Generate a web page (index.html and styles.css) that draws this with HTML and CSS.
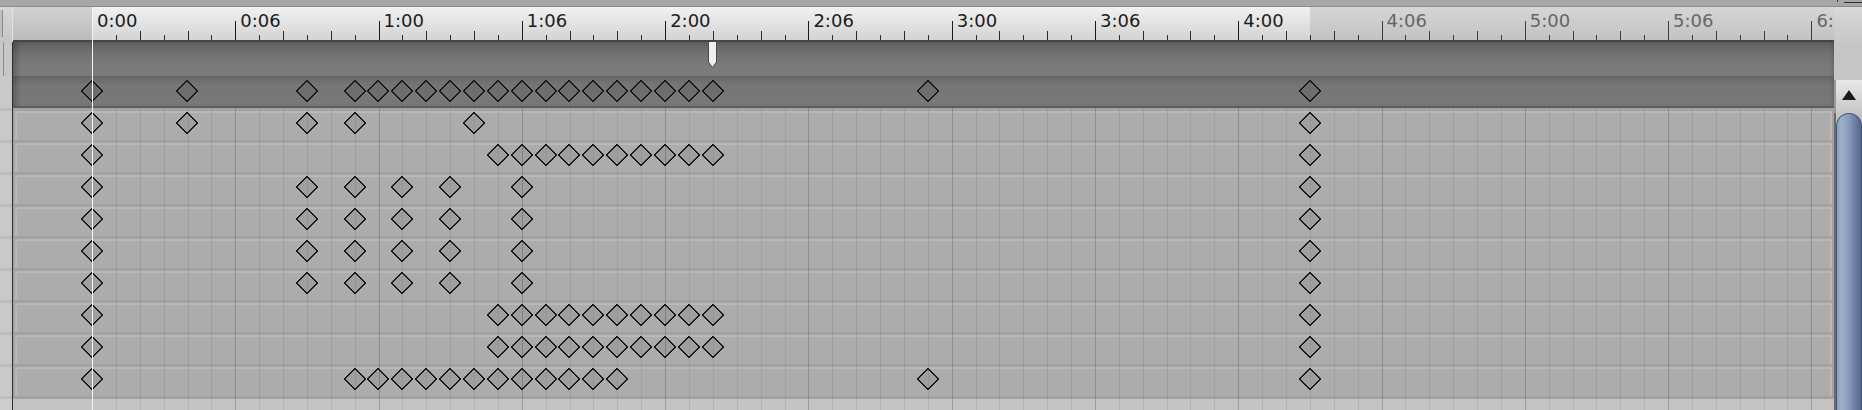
FILE: index.html
```html
<!DOCTYPE html>
<html>
<head>
<meta charset="utf-8">
<title>Timeline</title>
<link rel="stylesheet" href="styles.css">
</head>
<body>
<svg class="defs" width="0" height="0" aria-hidden="true">
  <symbol id="dm" viewBox="0 0 22 22">
    <path d="M11 0.8 L21.2 11 L11 21.2 L0.8 11 Z" fill="rgba(0,0,0,0.07)" stroke="#181818" stroke-width="1.5" shape-rendering="crispEdges"/>
  </symbol>
</svg>
<div class="app">
  <div class="topbar"><span class="tb-mark"></span><span class="tb-line"></span></div>
  <div class="main">
    <div class="side">
      <div class="side-ruler"><span class="ctl"></span></div>
      <div class="side-hdr"><span class="ctl ctl-b"></span></div>
      <div class="side-sel"></div>
      <div class="side-slot"></div>
      <div class="side-slot"></div>
      <div class="side-slot"></div>
      <div class="side-slot"></div>
      <div class="side-slot"></div>
      <div class="side-slot"></div>
      <div class="side-slot"></div>
      <div class="side-slot"></div>
      <div class="side-slot"></div>
      <div class="side-end"></div>
      <div class="side-rest"></div>
    </div>
    <div class="divider"><div class="div-top"></div><div class="div-bot"></div></div>
    <div class="timeline">
      <div class="ruler">
        <div class="ruler-bg"><div class="rb-pre"></div><div class="rb-act"></div><div class="rb-post"></div></div>
        <div class="ruler-scale">
          <div class="lead"></div>
          <div class="maj"><span class="lbl">0:00</span><div class="ticks"><i class="M"></i><i></i><i class="t"></i><i></i><i class="t"></i><i></i></div></div>
          <div class="maj"><span class="lbl">0:06</span><div class="ticks"><i class="M"></i><i></i><i class="t"></i><i></i><i class="t"></i><i></i></div></div>
          <div class="maj"><span class="lbl">1:00</span><div class="ticks"><i class="M"></i><i></i><i class="t"></i><i></i><i class="t"></i><i></i></div></div>
          <div class="maj"><span class="lbl">1:06</span><div class="ticks"><i class="M"></i><i></i><i class="t"></i><i></i><i class="t"></i><i></i></div></div>
          <div class="maj"><span class="lbl">2:00</span><div class="ticks"><i class="M"></i><i></i><i class="t"></i><i></i><i class="t"></i><i></i></div></div>
          <div class="maj"><span class="lbl">2:06</span><div class="ticks"><i class="M"></i><i></i><i class="t"></i><i></i><i class="t"></i><i></i></div></div>
          <div class="maj"><span class="lbl">3:00</span><div class="ticks"><i class="M"></i><i></i><i class="t"></i><i></i><i class="t"></i><i></i></div></div>
          <div class="maj"><span class="lbl">3:06</span><div class="ticks"><i class="M"></i><i></i><i class="t"></i><i></i><i class="t"></i><i></i></div></div>
          <div class="maj"><span class="lbl">4:00</span><div class="ticks"><i class="M"></i><i></i><i class="t"></i><i></i><i class="t"></i><i></i></div></div>
          <div class="maj dim"><span class="lbl">4:06</span><div class="ticks"><i class="M"></i><i></i><i class="t"></i><i></i><i class="t"></i><i></i></div></div>
          <div class="maj dim"><span class="lbl">5:00</span><div class="ticks"><i class="M"></i><i></i><i class="t"></i><i></i><i class="t"></i><i></i></div></div>
          <div class="maj dim"><span class="lbl">5:06</span><div class="ticks"><i class="M"></i><i></i><i class="t"></i><i></i><i class="t"></i><i></i></div></div>
          <div class="maj dim"><span class="lbl">6:00</span><div class="ticks"><i class="M"></i><i></i><i class="t"></i><i></i><i class="t"></i><i></i></div></div>
        </div>
      </div>
      <div class="tracks">
        <div class="layer-bg">
          <div class="bg-hdr"></div>
          <div class="bg-sel"></div>
          <div class="bg-slot"></div>
          <div class="bg-slot"></div>
          <div class="bg-slot"></div>
          <div class="bg-slot"></div>
          <div class="bg-slot"></div>
          <div class="bg-slot"></div>
          <div class="bg-slot"></div>
          <div class="bg-slot"></div>
          <div class="bg-slot"></div>
          <div class="bg-end"></div>
          <div class="bg-empty"></div>
        </div>
        <div class="layer-grid">
          <div class="gspace"></div>
          <div class="glines">
            <div class="glead"></div>
            <div class="gg"><b></b><b></b><b></b><b></b><b></b><b></b></div>
            <div class="gg"><b></b><b></b><b></b><b></b><b></b><b></b></div>
            <div class="gg"><b></b><b></b><b></b><b></b><b></b><b></b></div>
            <div class="gg"><b></b><b></b><b></b><b></b><b></b><b></b></div>
            <div class="gg"><b></b><b></b><b></b><b></b><b></b><b></b></div>
            <div class="gg"><b></b><b></b><b></b><b></b><b></b><b></b></div>
            <div class="gg"><b></b><b></b><b></b><b></b><b></b><b></b></div>
            <div class="gg"><b></b><b></b><b></b><b></b><b></b><b></b></div>
            <div class="gg"><b></b><b></b><b></b><b></b><b></b><b></b></div>
            <div class="gg"><b></b><b></b><b></b><b></b><b></b><b></b></div>
            <div class="gg"><b></b><b></b><b></b><b></b><b></b><b></b></div>
            <div class="gg"><b></b><b></b><b></b><b></b><b></b><b></b></div>
            <div class="gg"><b></b><b></b><b></b><b></b><b></b><b></b></div>
          </div>
        </div>
        <div class="layer-keys">
          <div class="krow hdr">
            <svg class="marker" style="grid-column:27" viewBox="0 0 9 26"><path d="M0.5 0 V20 L4.5 25.5 L8.5 20 V0" fill="#efefef" stroke="#4a4a4a" stroke-width="1"/></svg>
          </div>
          <div class="krow">
            <svg class="k" style="grid-column:1"><use href="#dm"/></svg>
            <svg class="k" style="grid-column:5"><use href="#dm"/></svg>
            <svg class="k" style="grid-column:10"><use href="#dm"/></svg>
            <svg class="k" style="grid-column:12"><use href="#dm"/></svg>
            <svg class="k" style="grid-column:13"><use href="#dm"/></svg>
            <svg class="k" style="grid-column:14"><use href="#dm"/></svg>
            <svg class="k" style="grid-column:15"><use href="#dm"/></svg>
            <svg class="k" style="grid-column:16"><use href="#dm"/></svg>
            <svg class="k" style="grid-column:17"><use href="#dm"/></svg>
            <svg class="k" style="grid-column:18"><use href="#dm"/></svg>
            <svg class="k" style="grid-column:19"><use href="#dm"/></svg>
            <svg class="k" style="grid-column:20"><use href="#dm"/></svg>
            <svg class="k" style="grid-column:21"><use href="#dm"/></svg>
            <svg class="k" style="grid-column:22"><use href="#dm"/></svg>
            <svg class="k" style="grid-column:23"><use href="#dm"/></svg>
            <svg class="k" style="grid-column:24"><use href="#dm"/></svg>
            <svg class="k" style="grid-column:25"><use href="#dm"/></svg>
            <svg class="k" style="grid-column:26"><use href="#dm"/></svg>
            <svg class="k" style="grid-column:27"><use href="#dm"/></svg>
            <svg class="k" style="grid-column:36"><use href="#dm"/></svg>
            <svg class="k" style="grid-column:52"><use href="#dm"/></svg>
          </div>
          <div class="krow">
            <svg class="k" style="grid-column:1"><use href="#dm"/></svg>
            <svg class="k" style="grid-column:5"><use href="#dm"/></svg>
            <svg class="k" style="grid-column:10"><use href="#dm"/></svg>
            <svg class="k" style="grid-column:12"><use href="#dm"/></svg>
            <svg class="k" style="grid-column:17"><use href="#dm"/></svg>
            <svg class="k" style="grid-column:52"><use href="#dm"/></svg>
          </div>
          <div class="krow">
            <svg class="k" style="grid-column:1"><use href="#dm"/></svg>
            <svg class="k" style="grid-column:18"><use href="#dm"/></svg>
            <svg class="k" style="grid-column:19"><use href="#dm"/></svg>
            <svg class="k" style="grid-column:20"><use href="#dm"/></svg>
            <svg class="k" style="grid-column:21"><use href="#dm"/></svg>
            <svg class="k" style="grid-column:22"><use href="#dm"/></svg>
            <svg class="k" style="grid-column:23"><use href="#dm"/></svg>
            <svg class="k" style="grid-column:24"><use href="#dm"/></svg>
            <svg class="k" style="grid-column:25"><use href="#dm"/></svg>
            <svg class="k" style="grid-column:26"><use href="#dm"/></svg>
            <svg class="k" style="grid-column:27"><use href="#dm"/></svg>
            <svg class="k" style="grid-column:52"><use href="#dm"/></svg>
          </div>
          <div class="krow">
            <svg class="k" style="grid-column:1"><use href="#dm"/></svg>
            <svg class="k" style="grid-column:10"><use href="#dm"/></svg>
            <svg class="k" style="grid-column:12"><use href="#dm"/></svg>
            <svg class="k" style="grid-column:14"><use href="#dm"/></svg>
            <svg class="k" style="grid-column:16"><use href="#dm"/></svg>
            <svg class="k" style="grid-column:19"><use href="#dm"/></svg>
            <svg class="k" style="grid-column:52"><use href="#dm"/></svg>
          </div>
          <div class="krow">
            <svg class="k" style="grid-column:1"><use href="#dm"/></svg>
            <svg class="k" style="grid-column:10"><use href="#dm"/></svg>
            <svg class="k" style="grid-column:12"><use href="#dm"/></svg>
            <svg class="k" style="grid-column:14"><use href="#dm"/></svg>
            <svg class="k" style="grid-column:16"><use href="#dm"/></svg>
            <svg class="k" style="grid-column:19"><use href="#dm"/></svg>
            <svg class="k" style="grid-column:52"><use href="#dm"/></svg>
          </div>
          <div class="krow">
            <svg class="k" style="grid-column:1"><use href="#dm"/></svg>
            <svg class="k" style="grid-column:10"><use href="#dm"/></svg>
            <svg class="k" style="grid-column:12"><use href="#dm"/></svg>
            <svg class="k" style="grid-column:14"><use href="#dm"/></svg>
            <svg class="k" style="grid-column:16"><use href="#dm"/></svg>
            <svg class="k" style="grid-column:19"><use href="#dm"/></svg>
            <svg class="k" style="grid-column:52"><use href="#dm"/></svg>
          </div>
          <div class="krow">
            <svg class="k" style="grid-column:1"><use href="#dm"/></svg>
            <svg class="k" style="grid-column:10"><use href="#dm"/></svg>
            <svg class="k" style="grid-column:12"><use href="#dm"/></svg>
            <svg class="k" style="grid-column:14"><use href="#dm"/></svg>
            <svg class="k" style="grid-column:16"><use href="#dm"/></svg>
            <svg class="k" style="grid-column:19"><use href="#dm"/></svg>
            <svg class="k" style="grid-column:52"><use href="#dm"/></svg>
          </div>
          <div class="krow">
            <svg class="k" style="grid-column:1"><use href="#dm"/></svg>
            <svg class="k" style="grid-column:18"><use href="#dm"/></svg>
            <svg class="k" style="grid-column:19"><use href="#dm"/></svg>
            <svg class="k" style="grid-column:20"><use href="#dm"/></svg>
            <svg class="k" style="grid-column:21"><use href="#dm"/></svg>
            <svg class="k" style="grid-column:22"><use href="#dm"/></svg>
            <svg class="k" style="grid-column:23"><use href="#dm"/></svg>
            <svg class="k" style="grid-column:24"><use href="#dm"/></svg>
            <svg class="k" style="grid-column:25"><use href="#dm"/></svg>
            <svg class="k" style="grid-column:26"><use href="#dm"/></svg>
            <svg class="k" style="grid-column:27"><use href="#dm"/></svg>
            <svg class="k" style="grid-column:52"><use href="#dm"/></svg>
          </div>
          <div class="krow">
            <svg class="k" style="grid-column:1"><use href="#dm"/></svg>
            <svg class="k" style="grid-column:18"><use href="#dm"/></svg>
            <svg class="k" style="grid-column:19"><use href="#dm"/></svg>
            <svg class="k" style="grid-column:20"><use href="#dm"/></svg>
            <svg class="k" style="grid-column:21"><use href="#dm"/></svg>
            <svg class="k" style="grid-column:22"><use href="#dm"/></svg>
            <svg class="k" style="grid-column:23"><use href="#dm"/></svg>
            <svg class="k" style="grid-column:24"><use href="#dm"/></svg>
            <svg class="k" style="grid-column:25"><use href="#dm"/></svg>
            <svg class="k" style="grid-column:26"><use href="#dm"/></svg>
            <svg class="k" style="grid-column:27"><use href="#dm"/></svg>
            <svg class="k" style="grid-column:52"><use href="#dm"/></svg>
          </div>
          <div class="krow">
            <svg class="k" style="grid-column:1"><use href="#dm"/></svg>
            <svg class="k" style="grid-column:12"><use href="#dm"/></svg>
            <svg class="k" style="grid-column:13"><use href="#dm"/></svg>
            <svg class="k" style="grid-column:14"><use href="#dm"/></svg>
            <svg class="k" style="grid-column:15"><use href="#dm"/></svg>
            <svg class="k" style="grid-column:16"><use href="#dm"/></svg>
            <svg class="k" style="grid-column:17"><use href="#dm"/></svg>
            <svg class="k" style="grid-column:18"><use href="#dm"/></svg>
            <svg class="k" style="grid-column:19"><use href="#dm"/></svg>
            <svg class="k" style="grid-column:20"><use href="#dm"/></svg>
            <svg class="k" style="grid-column:21"><use href="#dm"/></svg>
            <svg class="k" style="grid-column:22"><use href="#dm"/></svg>
            <svg class="k" style="grid-column:23"><use href="#dm"/></svg>
            <svg class="k" style="grid-column:36"><use href="#dm"/></svg>
            <svg class="k" style="grid-column:52"><use href="#dm"/></svg>
          </div>
        </div>
      </div>
      <div class="playhead"></div>
    </div>
    <div class="scroll">
      <div class="sc-ruler"></div>
      <div class="sc-gap"></div>
      <div class="sc-btn"><svg class="tri" viewBox="0 0 14 10"><path d="M7 0 L14 10 L0 10 Z" fill="#1a1a1a"/></svg></div>
      <div class="sc-track"><div class="sc-thumb"></div></div>
    </div>
  </div>
</div>
</body>
</html>
```
FILE: styles.css
```css
* { box-sizing: border-box; margin: 0; padding: 0; }
html, body { width: 1862px; height: 410px; overflow: hidden; }
body { background: #a7a7a7; font-family: "DejaVu Sans", "Liberation Sans", sans-serif; }

.defs { position: absolute; width: 0; height: 0; overflow: hidden; }

.app { display: flex; flex-direction: column; height: 410px; }

.topbar {
  height: 7px; background: #a7a7a7; border-bottom: 1px solid #8b8b8b;
  display: flex; justify-content: flex-end; align-items: flex-start;
}
.tb-mark { width: 1px; height: 2px; background: #3a3a3a; margin-right: 6px; }
.tb-line { width: 18px; height: 1px; background: #2d2d2d; margin-top: 2px; }

.main { flex: 1; display: flex; min-height: 0; }

/* left strip */
.side { width: 12px; display: flex; flex-direction: column; }
.side-ruler { height: 35px; background: linear-gradient(#d6d6d6, #c6c6c6); }
.ctl { display: block; width: 3px; height: 27px; margin-top: 3px; background: #bfbfbf; border-right: 1px solid #8a8a8a; }
.side-hdr { height: 34px; background: #c7c7c7; }
.ctl-b { width: 4px; height: 34px; margin-top: 0; background: #c9c9c9; border-right: 1px solid #8c8c8c; }
.side-sel { height: 32px; background: #c9c9c9; }
.side-slot { height: 32px; border-top: 3px solid #bdbdbd; background: #c9c9c9; }
.side-end { height: 3px; background: #bdbdbd; }
.side-rest { flex: 1; background: #cdcdcd; }

.divider { width: 1px; display: flex; flex-direction: column; }
.div-top { height: 35px; background: #e2e2e2; }
.div-bot { flex: 1; background: #2f2f2f; }

/* timeline */
.timeline { flex: 1; min-width: 0; position: relative; overflow: hidden; display: flex; flex-direction: column; }

.ruler {
  height: 35px; border-bottom: 2px solid #454545;
  display: grid; grid-template-columns: minmax(0, 1fr); grid-template-rows: minmax(0, 1fr);
}
.ruler > * { grid-area: 1 / 1; min-width: 0; overflow: hidden; }
.ruler-bg { display: flex; }
.rb-pre { flex: 0 0 79px; background: linear-gradient(#d2d2d2, #bcbcbc); }
.rb-act { flex: 0 0 1218px; background: linear-gradient(#f1f1f1, #d3d3d3); }
.rb-post { flex: 1; background: linear-gradient(#d6d6d6, #c2c2c2); }

.ruler-scale { display: flex; z-index: 1; }
.lead { flex: 0 0 79px; }
.maj {
  flex: 0 0 143.29px; display: grid;
  grid-template-columns: minmax(0, 1fr); grid-template-rows: minmax(0, 1fr);
}
.maj > * { grid-area: 1 / 1; }
.lbl {
  align-self: start; padding: 4px 0 0 5px;
  font-size: 18px; line-height: 20px; color: #1c1c1c; white-space: nowrap;
}
.ticks { align-self: end; height: 19px; display: flex; align-items: flex-end; }
.ticks i { flex: 1 1 0; height: 5px; border-left: 1px solid #2a2a2a; }
.ticks i.t { height: 9px; }
.ticks i.M { height: 19px; border-left-color: #1a1a1a; }
.dim .lbl { color: #666; }
.dim .ticks i { border-left-color: #3c3c3c; }

.tracks {
  flex: 1; min-height: 0; display: grid;
  grid-template-columns: minmax(0, 1fr); grid-template-rows: minmax(0, 1fr);
}
.tracks > * { grid-area: 1 / 1; min-width: 0; overflow: hidden; }

.layer-bg { display: flex; flex-direction: column; }
.bg-hdr {
  height: 34px;
  background: linear-gradient(#5e5e5e, #707070 30%, #7a7a7a 70%, #7c7c7c);
  box-shadow: inset 7px 0 6px -5px rgba(0,0,0,.3), inset -5px 0 5px -4px rgba(0,0,0,.2);
}
.bg-sel {
  height: 32px; border-bottom: 2px solid #5d5d5d;
  background: linear-gradient(#676767, #767676 30%, #787878);
  box-shadow: inset 7px 0 6px -5px rgba(0,0,0,.3), inset -5px 0 5px -4px rgba(0,0,0,.2);
}
.bg-slot { height: 32px; padding: 3px 2px 0 2px; background: #a2a2a2; }
.bg-slot::before {
  content: ""; display: block; height: 29px;
  background: #acacac; border: 2px solid #b9b9b9;
}
.bg-end { height: 3px; background: #a2a2a2; }
.bg-empty { flex: 1; background: #c3c3c3; }

.layer-grid { display: flex; flex-direction: column; z-index: 1; }
.gspace { height: 66px; }
.glines { flex: 1; display: flex; }
.glead { flex: 0 0 79px; }
.gg { flex: 0 0 143.29px; display: flex; }
.gg b { flex: 1 1 0; border-left: 1px solid rgba(0,0,0,.07); }
.gg b:first-child { border-left-color: rgba(0,0,0,.19); }

.layer-keys { display: flex; flex-direction: column; z-index: 2; }
.krow {
  height: 32px; flex: 0 0 auto; padding: 4px 0 0 67.06px;
  display: grid; grid-template-columns: repeat(73, 23.88px);
  justify-items: center; align-items: start;
}
.krow.hdr { height: 34px; padding-top: 0; }
.k { display: block; width: 22px; height: 22px; grid-row: 1; }
.marker { display: block; width: 9px; height: 26px; grid-row: 1; }

.playhead { position: absolute; left: 79px; top: 0; bottom: 0; width: 1px; background: #f4f4f4; z-index: 5; }

/* scrollbar */
.scroll { width: 28px; display: flex; flex-direction: column; }
.sc-ruler { height: 35px; background: linear-gradient(#d8d8d8, #c8c8c8); }
.sc-gap { height: 38px; background: #c5c5c5; }
.sc-btn {
  height: 33px; padding-top: 10px; display: flex; justify-content: center; align-items: flex-start;
  background: linear-gradient(#e9e9e9, #c7c7c7); border-left: 2px solid #9a9a9a;
}
.tri { display: block; width: 14px; height: 10px; }
.sc-track { flex: 1; display: flex; background: #c4c4c4; border-left: 2px solid #6b6b6b; }
.sc-thumb {
  flex: 1; border: 1px solid #43557a; border-bottom: none; border-radius: 13px 13px 0 0;
  background: linear-gradient(to right, #8c9ebe, #a0b0cc 18%, #8699ba 50%, #66799d 82%, #53668b);
}
```
